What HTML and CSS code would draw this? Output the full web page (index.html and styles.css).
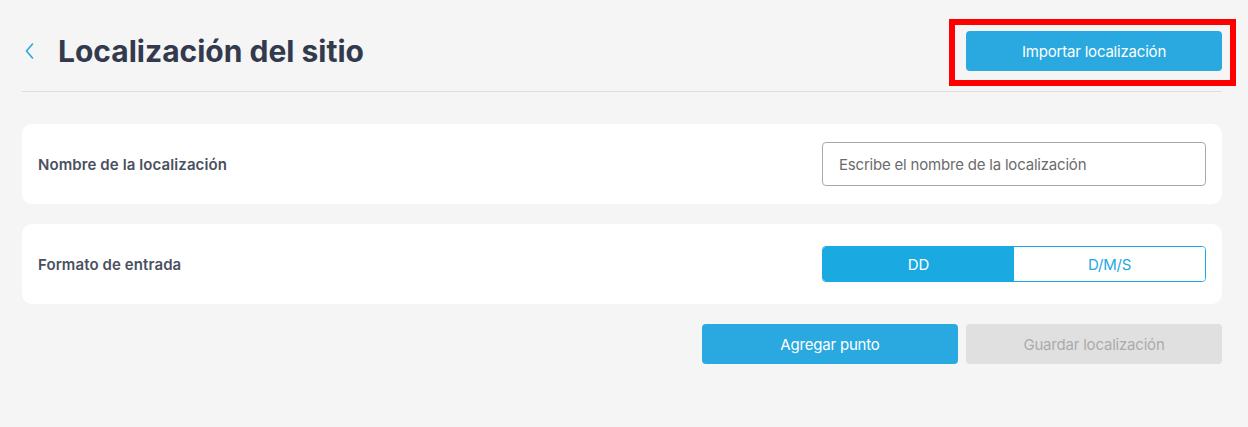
FILE: index.html
```html
<!DOCTYPE html>
<html lang="es">
<head>
<meta charset="utf-8">
<title>Localización del sitio</title>
<link rel="stylesheet" href="styles.css">
</head>
<body>
<div class="page">
  <header class="header">
    <div class="title-wrap">
      <button class="back" aria-label="Volver">
        <svg width="10" height="16" viewBox="0 0 10 16"><path d="M7.5 1 L1.5 8 L7.5 15" fill="none" stroke="#2ba6dc" stroke-width="1.6" stroke-linecap="round" stroke-linejoin="round"/></svg>
      </button>
      <h1 class="title">Localización del sitio</h1>
    </div>
    <div class="import-wrap">
      <button class="btn btn-primary">Importar localización</button>
      <span class="highlight"></span>
    </div>
  </header>

  <section class="card">
    <span class="label">Nombre de la localización</span>
    <input class="text-input" type="text" placeholder="Escribe el nombre de la localización">
  </section>

  <section class="card">
    <span class="label">Formato de entrada</span>
    <div class="toggle">
      <button class="toggle-opt active">DD</button>
      <button class="toggle-opt">D/M/S</button>
    </div>
  </section>

  <div class="actions">
    <button class="btn btn-primary">Agregar punto</button>
    <button class="btn btn-disabled" disabled>Guardar localización</button>
  </div>
</div>
</body>
</html>
```

FILE: styles.css
```css
* { box-sizing: border-box; }
html, body { margin: 0; background: #f5f5f5; }
body { font-family: Inter, "Noto Sans", sans-serif; color: #333a4d; }

.page { padding: 0 26px 0 22px; width: 1248px; }

.header {
  display: flex;
  justify-content: space-between;
  align-items: center;
  padding: 31px 0 20px;
  border-bottom: 1px solid #dedede;
  margin-bottom: 32px;
}
.title-wrap { display: flex; align-items: center; }
.back {
  background: none; border: 0; padding: 0;
  margin-left: 3px; width: 10px; height: 16px;
  display: flex; align-items: center; cursor: pointer;
}
.title {
  margin: 0 0 0 23px;
  font-size: 30px;
  font-weight: 700;
  letter-spacing: 0;
  color: #333a4d;
  line-height: 40px;
}

.import-wrap { position: relative; }
.highlight {
  position: absolute;
  left: -17px; top: -12px;
  width: 287px; height: 67px;
  border: 6px solid #ff0000;
  pointer-events: none;
}

.btn {
  width: 256px; height: 40px;
  border: 0; border-radius: 4px;
  font-family: Inter, "Noto Sans", sans-serif;
  font-size: 15px; font-weight: 400;
  letter-spacing: -0.2px;
  cursor: pointer;
}
.btn-primary { background: #29a9df; color: #ffffff; }
.btn-disabled { background: #e0e0e0; color: #ababab; cursor: default; }

.card {
  background: #ffffff;
  border-radius: 10px;
  height: 80px;
  padding: 0 16px;
  display: flex;
  align-items: center;
  justify-content: space-between;
  margin-bottom: 20px;
}
.label {
  font-size: 15px;
  font-weight: 600;
  color: #4a505f;
  letter-spacing: 0.1px;
}
.text-input {
  width: 384px; height: 44px;
  border: 1px solid #a9a9a9;
  border-radius: 4px;
  padding: 0 16px;
  font-family: Inter, "Noto Sans", sans-serif;
  font-size: 15px;
  color: #333;
  background: #fff;
  outline: none;
}
.text-input::placeholder { color: #6b6b6b; letter-spacing: -0.2px; }

.toggle {
  display: flex;
  width: 384px; height: 36px;
  border: 1px solid #1aa9e0;
  border-radius: 4px;
  overflow: hidden;
}
.toggle-opt {
  flex: 1;
  border: 0;
  background: #fff;
  color: #1aa9e0;
  font-family: Inter, "Noto Sans", sans-serif;
  font-size: 15px;
  letter-spacing: -0.2px;
  cursor: pointer;
}
.toggle-opt.active { background: #1aa9e0; color: #fff; }

.actions {
  display: flex;
  justify-content: flex-end;
  gap: 8px;
}
```
